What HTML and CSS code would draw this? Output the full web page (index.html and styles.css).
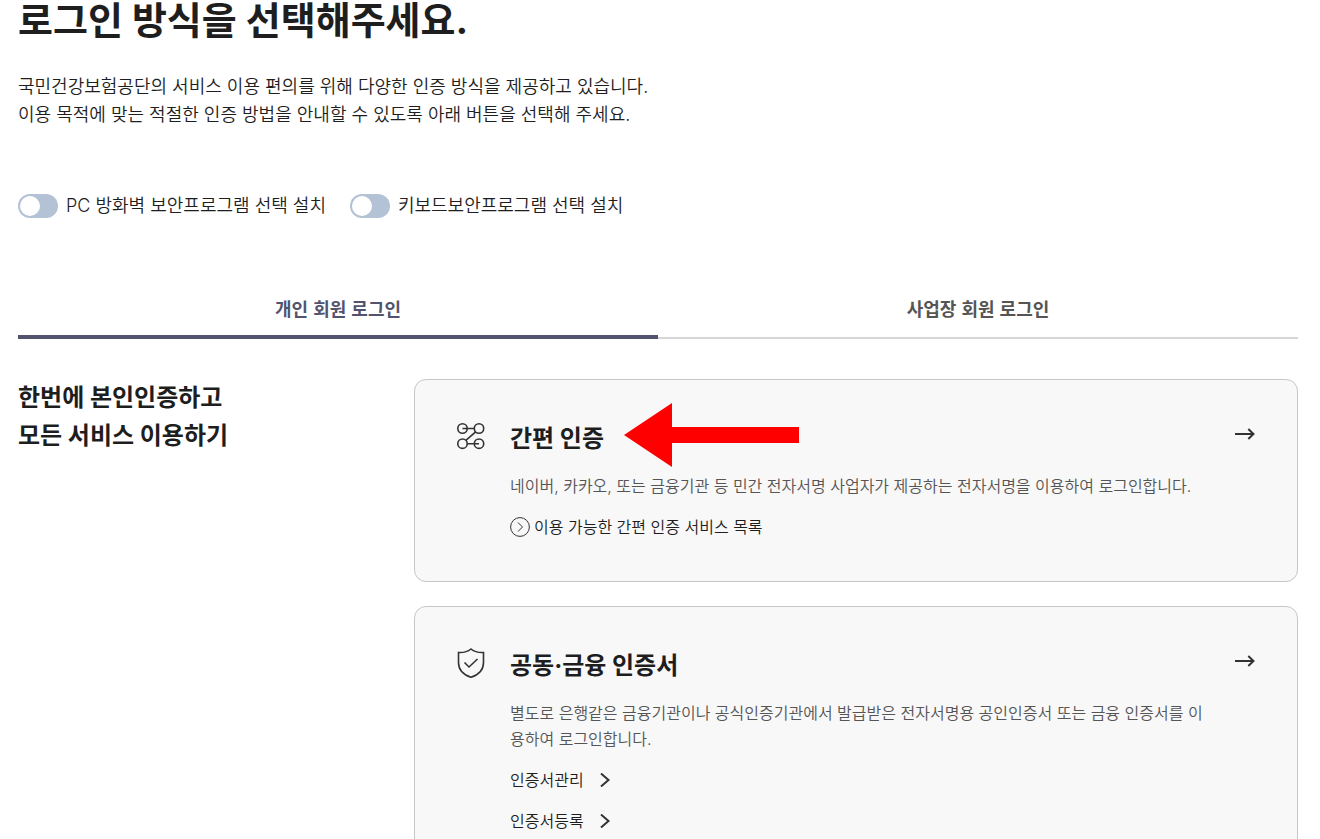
FILE: index.html
```html
<!DOCTYPE html>
<html lang="ko">
<head>
    <meta charset="UTF-8">
    <meta name="viewport" content="width=device-width, initial-scale=1.0">
    <title>로그인</title>
    <link rel="stylesheet" href="styles.css">
</head>
<body>
<main class="container">
    <h1>로그인 방식을 선택해주세요.</h1>
    <p class="intro">국민건강보험공단의 서비스 이용 편의를 위해 다양한 인증 방식을 제공하고 있습니다.<br>이용 목적에 맞는 적절한 인증 방법을 안내할 수 있도록 아래 버튼을 선택해 주세요.</p>

    <!-- Security program options -->
    <div class="options">
        <label class="option" for="firewall"><input type="checkbox" class="switch" id="firewall">PC 방화벽 보안프로그램 선택 설치</label>
        <label class="option" for="keyboard"><input type="checkbox" class="switch" id="keyboard">키보드보안프로그램 선택 설치</label>
    </div>

    <div class="tabs" role="tablist">
        <button type="button" class="tab active" role="tab" aria-selected="true">개인 회원 로그인</button>
        <button type="button" class="tab" role="tab" aria-selected="false">사업장 회원 로그인</button>
    </div>

    <div class="login">
        <h2>한번에 본인인증하고<br>모든 서비스 이용하기</h2>

        <div class="cards">
            <section class="card">
                <svg class="card-icon" viewBox="0 0 32 32" aria-hidden="true">
                    <circle cx="7.500" cy="8.500" r="4.700"/>
                    <circle cx="24" cy="8.500" r="4.700"/>
                    <circle cx="7.500" cy="23.700" r="4.700"/>
                    <circle cx="24" cy="23.700" r="4.700"/>
                    <path d="M7.500 8.500H19.300M20.700 11.800L10.800 20.400M12.200 23.700H24"/>
                </svg>
                <div class="card-body">
                    <h3><span class="title">간편 인증
                        <svg class="pointer" viewBox="0 0 175 64" aria-hidden="true"><path d="M0 32L48 0V24H175V40H48V64Z"/></svg>
                    </span></h3>
                    <p>네이버, 카카오, 또는 금융기관 등 민간 전자서명 사업자가 제공하는 전자서명을 이용하여 로그인합니다.</p>
                    <a href="#" class="list-link">
                        <svg class="circle-icon" viewBox="0 0 20 20" aria-hidden="true"><circle cx="10" cy="10" r="9.400"/><path d="M8 5.500L12.500 10L8 14.500"/></svg>이용 가능한 간편 인증 서비스 목록
                    </a>
                </div>
                <a href="#" class="go" aria-label="간편 인증 로그인">
                    <svg viewBox="0 0 20 12" aria-hidden="true"><path d="M0 6H18.500M13.300 1L18.500 6L13.300 11"/></svg>
                </a>
            </section>

            <section class="card">
                <svg class="card-icon" viewBox="0 0 32 32" aria-hidden="true">
                    <path d="M16 2C12.500 4.800 8 5.800 3.500 5.500V15.500C3.500 23 9 28 16 30.300C23 28 28.500 23 28.500 15.500V5.500C24 5.800 19.500 4.800 16 2Z"/>
                    <path d="M9.500 15.500L14 20L22.500 12"/>
                </svg>
                <div class="card-body">
                    <h3>공동·금융 인증서</h3>
                    <p>별도로 은행같은 금융기관이나 공식인증기관에서 발급받은 전자서명용 공인인증서 또는 금융 인증서를 이용하여 로그인합니다.</p>
                    <a href="#" class="sub-link">인증서관리<svg class="chevron" viewBox="0 0 10 14" aria-hidden="true"><path d="M1 0.500L8.500 7L1 13.500"/></svg></a>
                    <a href="#" class="sub-link">인증서등록<svg class="chevron" viewBox="0 0 10 14" aria-hidden="true"><path d="M1 0.500L8.500 7L1 13.500"/></svg></a>
                </div>
                <a href="#" class="go" aria-label="공동·금융 인증서 로그인">
                    <svg viewBox="0 0 20 12" aria-hidden="true"><path d="M0 6H18.500M13.300 1L18.500 6L13.300 11"/></svg>
                </a>
            </section>
        </div>
    </div>
</main>
</body>
</html>
```
FILE: styles.css
```css
* {
    box-sizing: border-box;
}
html {
    overflow: hidden;
}
body {
    margin: 0;
    font-family: Inter, "Noto Sans CJK KR", sans-serif;
    font-size: 16px;
    font-weight: 350;
    color: #1e1e1e;
    background: #fff;
    word-break: break-all;
}
h1, h2, h3, p {
    margin: 0;
}
a {
    color: inherit;
    text-decoration: none;
}
svg {
    display: block;
    fill: none;
    stroke: #333;
}
.container {
    padding: 0 22px 0 18px;
}
h1 {
    font-size: 38px;
    line-height: 40px;
    font-weight: 700;
}
.intro {
    margin-top: 33px;
    font-size: 18px;
    line-height: 28px;
}

/* Switches */
.options {
    display: flex;
    gap: 24px;
    margin-top: 63px;
}
.option {
    display: flex;
    align-items: center;
    gap: 8px;
    font-size: 18px;
    line-height: 28px;
}
.switch {
    appearance: none;
    display: flex;
    align-items: center;
    width: 40px;
    height: 24px;
    margin: 0;
    padding: 0 2px;
    border-radius: 12px;
    background: #b4c2d6;
}
.switch::before {
    content: "";
    width: 20px;
    height: 20px;
    border-radius: 50%;
    background: #fff;
}
.switch:checked {
    justify-content: flex-end;
    background: #52546f;
}

/* Tabs */
.tabs {
    display: grid;
    grid-template-columns: 1fr 1fr;
    margin-top: 59px;
}
.tab {
    height: 60px;
    padding: 0 0 2px;
    border: 0;
    background: none;
    box-shadow: inset 0 -2px #d6d6d6;
    font-family: "Noto Sans CJK KR", sans-serif;
    font-size: 18px;
    font-weight: 700;
    color: #555;
}
.tab.active {
    box-shadow: inset 0 -4px #52546f;
    color: #52546f;
}

/* Login methods */
.login {
    display: grid;
    grid-template-columns: 396px 1fr;
    margin-top: 40px;
}
h2 {
    font-size: 24px;
    line-height: 38px;
    font-weight: 700;
}
.cards {
    display: grid;
    gap: 24px;
}
.card {
    display: flex;
    padding: 40px 40px 41px;
    border: 1px solid #c6c6c6;
    border-radius: 12px;
    background: #f8f8f8;
}
.card-icon {
    flex: none;
    width: 32px;
    height: 32px;
    margin-right: 23px;
    stroke-width: 1.6;
}
.card-body {
    flex: 1;
}
h3 {
    font-size: 24px;
    line-height: 38px;
    font-weight: 700;
}
.title {
    position: relative;
}
.pointer {
    position: absolute;
    left: 114px;
    top: -21px;
    width: 175px;
    height: 64px;
    fill: #f00;
    stroke: none;
}
.card p {
    margin-top: 15px;
    line-height: 26px;
    color: #555;
}
.list-link, .sub-link {
    display: flex;
    align-items: center;
    line-height: 26px;
    margin-top: 15px;
}
.circle-icon {
    width: 20px;
    height: 20px;
    margin-right: 4px;
}
.chevron {
    width: 10px;
    height: 14px;
    margin-left: 16px;
    stroke-width: 2;
}
.go {
    align-self: flex-start;
    padding: 8px 2px 0 24px;
}
.go svg {
    width: 20px;
    height: 12px;
    stroke-width: 2;
}
```
